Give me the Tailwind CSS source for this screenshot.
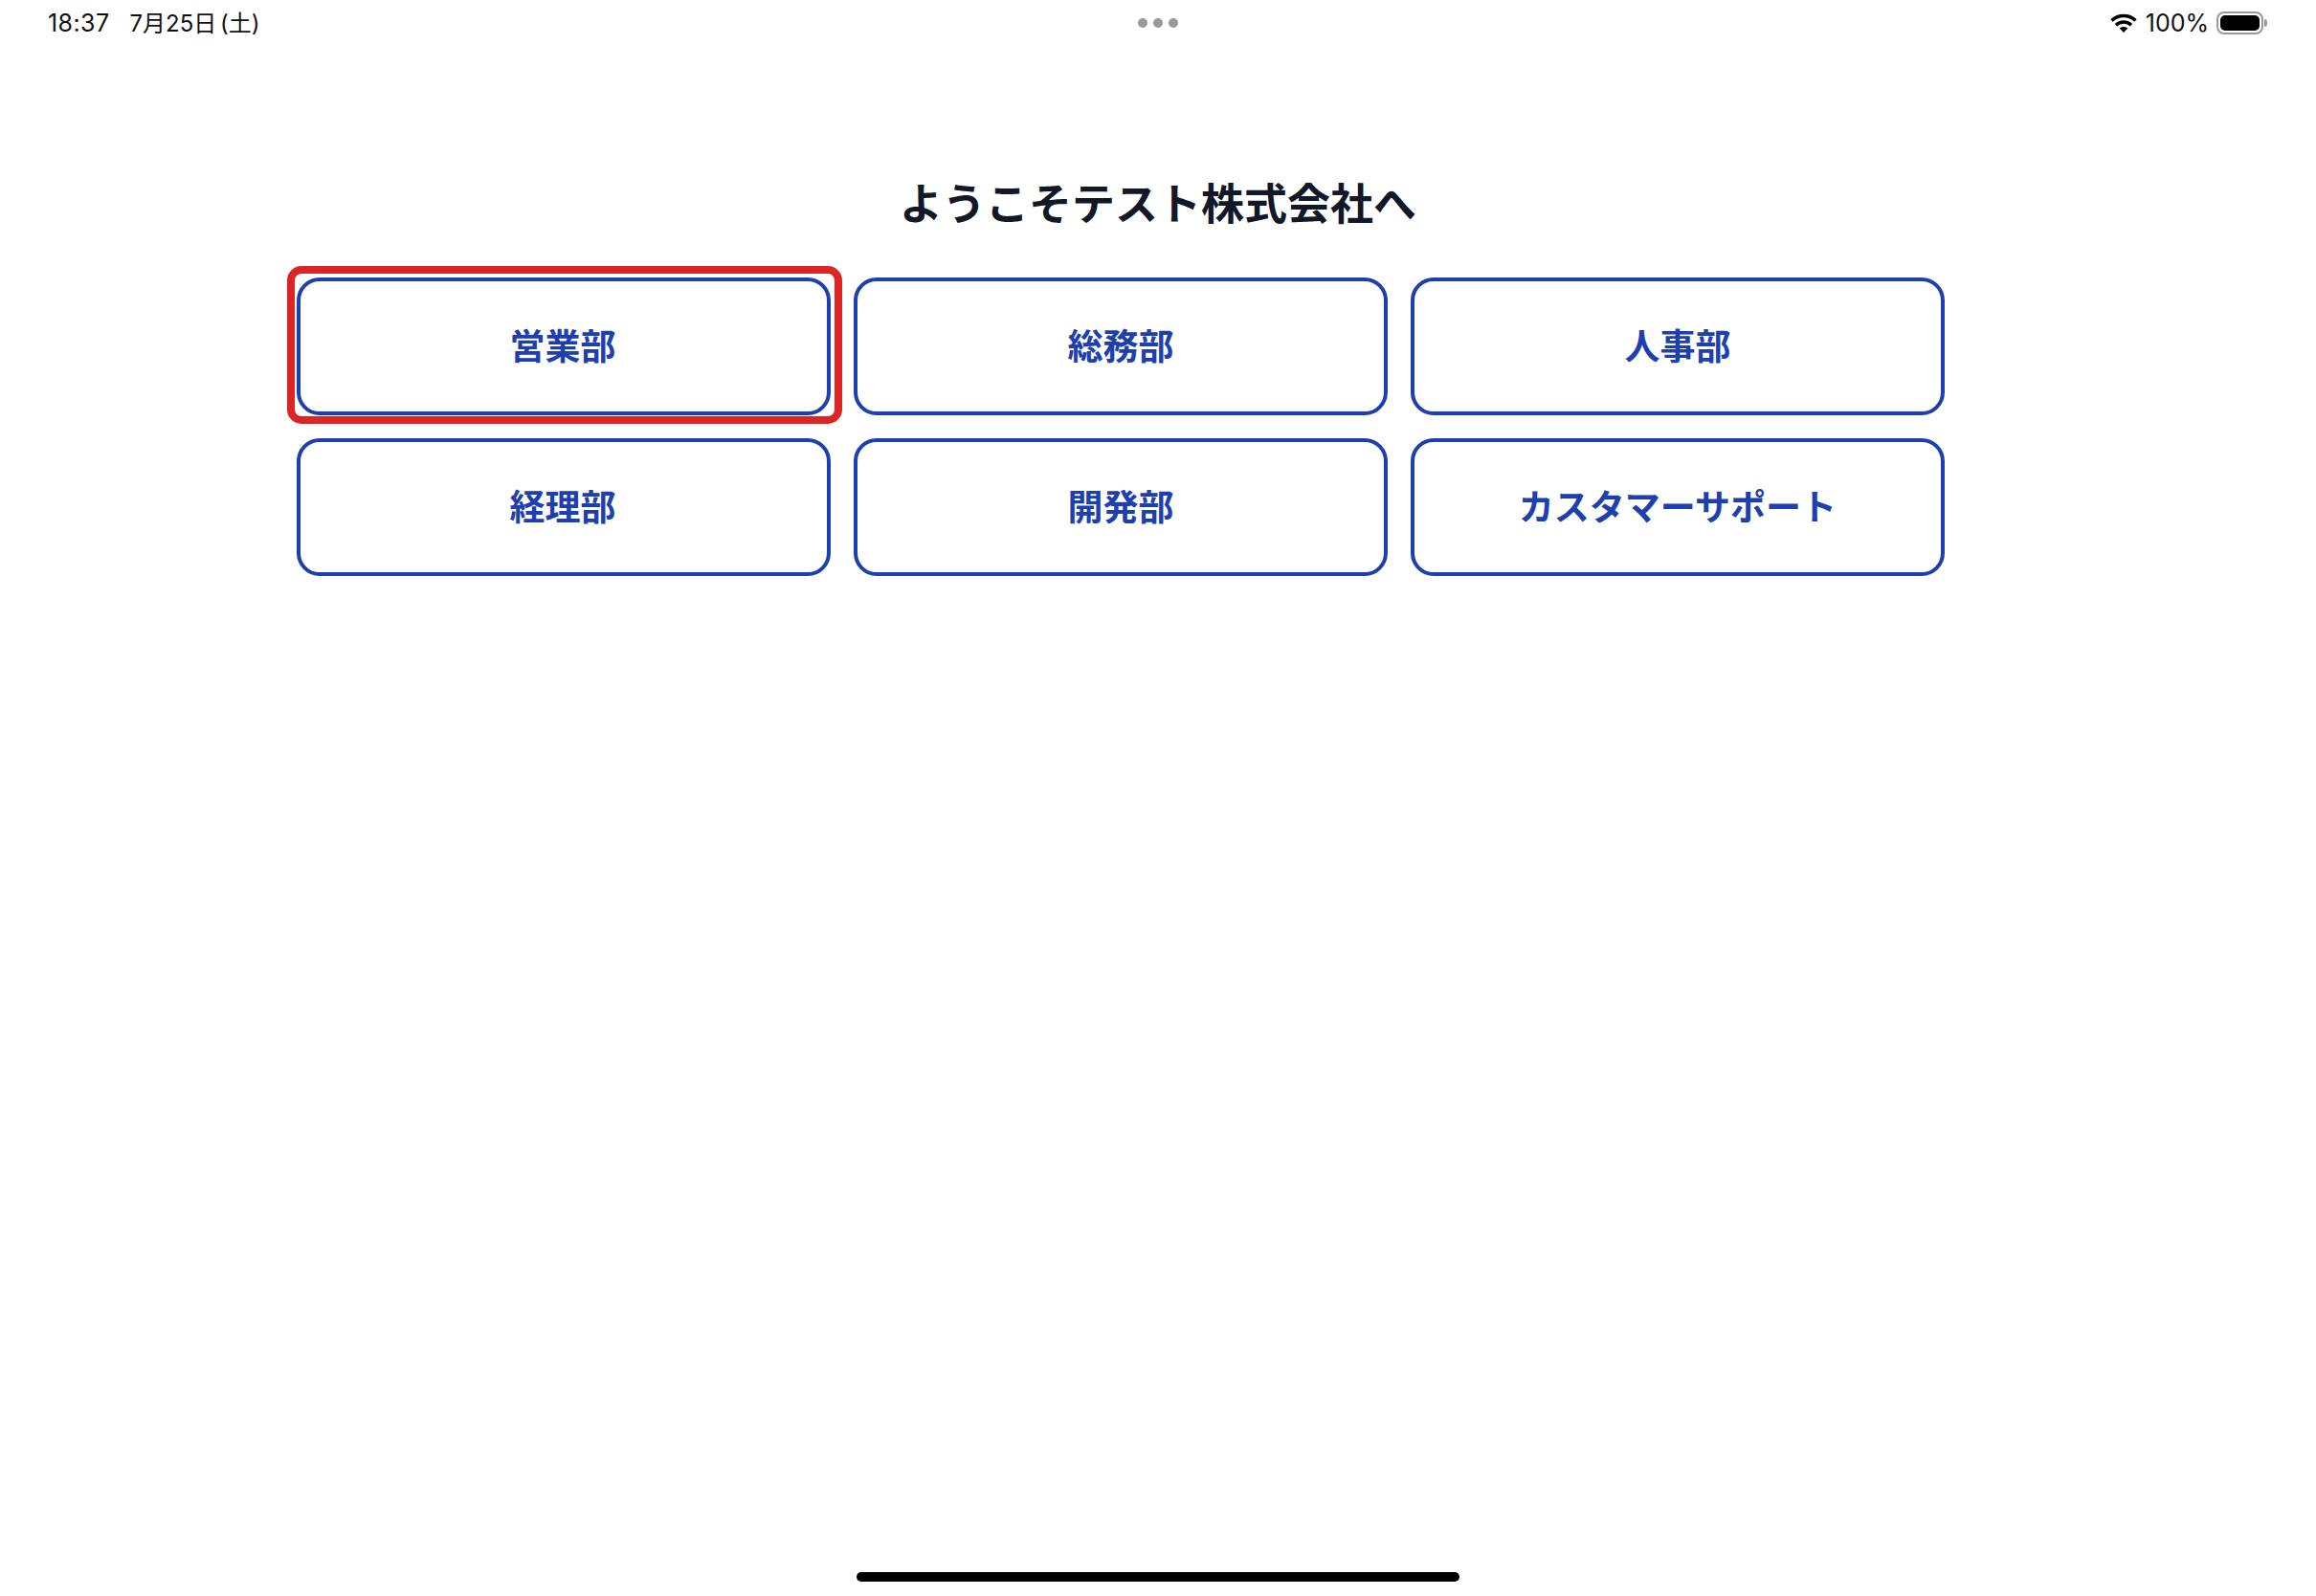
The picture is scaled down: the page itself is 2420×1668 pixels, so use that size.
<!DOCTYPE html>
<html lang="ja">
<head>
    <meta charset="UTF-8">
    <meta name="viewport" content="width=device-width, initial-scale=1.0">
    <title>ようこそ</title>
    <script src="https://cdn.jsdelivr.net/npm/@tailwindcss/browser@4"></script>
</head>
<body class="bg-white">
    <div class="flex flex-col h-[1668px] w-[2420px] overflow-hidden font-['Inter','Noto_Sans_CJK_JP',sans-serif]">
        <!-- status bar -->
        <div class="relative flex items-center justify-between h-[48px] pl-[50px] pr-[51px] text-[25px] text-[#111111]">
            <div class="flex items-center gap-[21px] pt-[1px]">
                <span class="tracking-[0.4px]">18:37</span>
                <span class="text-[24px] [word-spacing:-3px]">7月25日 (土)</span>
            </div>
            <div class="absolute left-[1189px] top-[19px] flex gap-[6px]">
                <span class="w-[10px] h-[10px] rounded-full bg-[#999999]"></span>
                <span class="w-[10px] h-[10px] rounded-full bg-[#999999]"></span>
                <span class="w-[10px] h-[10px] rounded-full bg-[#999999]"></span>
            </div>
            <div class="flex items-center">
                <svg class="w-[28px] h-[20px] mr-[9px]" viewBox="0 0 28 20" fill="none" stroke="#000000" stroke-width="3.4">
                    <path d="M1.5 7.5C8.5 .8 19.5 .8 26.5 7.5"/>
                    <path d="M6 12.2C10.5 8 17.5 8 22 12.2"/>
                    <path d="M14 20L9.6 15.6C12 13.4 16 13.4 18.4 15.6Z" fill="#000000" stroke="none"/>
                </svg>
                <span class="pt-[1px]">100%</span>
                <div class="flex items-center ml-[8px]">
                    <div class="w-[49px] h-[24px] rounded-[8px] border-2 border-[#999999] p-[2px]">
                        <div class="w-full h-full rounded-[5px] bg-black"></div>
                    </div>
                    <div class="w-[3px] h-[8px] ml-[1px] rounded-r-full bg-[#999999]"></div>
                </div>
            </div>
        </div>

        <!-- content -->
        <h1 class="mt-[135px] text-center text-[45px] leading-[62px] font-bold text-[#111827]">ようこそテスト株式会社へ</h1>
        <div class="grid grid-cols-3 gap-[24px] w-[1722px] ml-[310px] mt-[45px]">
            <button class="relative h-[144px] pt-[2px] pr-[2px] rounded-[24px] border-4 border-[#1e40af] text-[37px] font-bold text-[#1e40af]">
                営業部
                <span class="absolute -left-[14px] -right-[16px] -top-[16px] -bottom-[13px] rounded-[15px] border-[8px] border-[#dc2626]"></span>
            </button>
            <button class="h-[144px] pt-[2px] rounded-[24px] border-4 border-[#1e40af] text-[37px] font-bold text-[#1e40af]">総務部</button>
            <button class="h-[144px] pt-[2px] rounded-[24px] border-4 border-[#1e40af] text-[37px] font-bold text-[#1e40af]">人事部</button>
            <button class="h-[144px] pt-[2px] pr-[2px] rounded-[24px] border-4 border-[#1e40af] text-[37px] font-bold text-[#1e40af]">経理部</button>
            <button class="h-[144px] pt-[2px] rounded-[24px] border-4 border-[#1e40af] text-[37px] font-bold text-[#1e40af]">開発部</button>
            <button class="h-[144px] pt-[2px] rounded-[24px] border-4 border-[#1e40af] text-[37px] font-bold text-[#1e40af]">カスタマーサポート</button>
        </div>

        <!-- home indicator -->
        <div class="mt-auto mb-[15px] mx-auto w-[630px] h-[10px] rounded-full bg-black"></div>
    </div>
</body>
</html>
